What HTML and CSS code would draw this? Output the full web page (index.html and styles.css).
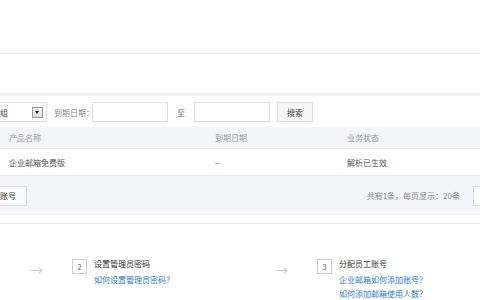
FILE: index.html
```html
<!DOCTYPE html>
<html lang="zh-CN">
<head>
    <meta charset="UTF-8">
    <title>企业邮箱</title>
    <link rel="stylesheet" href="styles.css">
</head>
<body>
    <div class="top"></div>
    <div class="sub"></div>
    <div class="gap"></div>
    <div class="panel">
        <div class="filter">
            <div class="select">
                <span>请选择分组</span>
                <i class="arrow"></i>
            </div>
            <label class="lbl">到期日期：</label>
            <input class="date" type="text">
            <span class="to">至</span>
            <input class="date" type="text">
            <button class="btn">搜索</button>
        </div>
        <div class="row head">
            <div class="c1">产品名称</div>
            <div class="c2">到期日期</div>
            <div class="c3">业务状态</div>
        </div>
        <div class="row">
            <div class="c1">企业邮箱免费版</div>
            <div class="c2">--</div>
            <div class="c3">解析已生效</div>
        </div>
        <div class="foot">
            <button class="btn add">添加账号</button>
            <span class="total">共有1条，每页显示：20条</span>
            <span class="pagebox"></span>
        </div>
    </div>
    <div class="steps">
        <div class="step">
            <span class="go">&rarr;</span>
            <span class="num">2</span>
            <div class="info">
                <p class="title">设置管理员密码</p>
                <a href="#">如何设置管理员密码？</a>
            </div>
        </div>
        <div class="step">
            <span class="go">&rarr;</span>
            <span class="num">3</span>
            <div class="info">
                <p class="title">分配员工账号</p>
                <a href="#">企业邮箱如何添加账号？</a>
                <a href="#">如何添加邮箱使用人数？</a>
            </div>
        </div>
    </div>
</body>
</html>
```

FILE: styles.css
```css
body {
    margin: 0;
    font-family: "Noto Sans CJK SC", "Liberation Sans", sans-serif;
    font-size: 8px;
    color: #555;
    background-color: #ffffff;
    overflow: hidden;
}
.top {
    height: 53px;
    border-bottom: 1px solid #e6e6e6;
}
.sub {
    height: 39px;
}
.gap {
    height: 3px;
    background-color: #f2f2f2;
}
.filter {
    display: flex;
    align-items: center;
    height: 20px;
    margin: 6px 0 5px -53px;
    white-space: nowrap;
}
.select {
    display: flex;
    align-items: center;
    justify-content: space-between;
    box-sizing: border-box;
    width: 100px;
    height: 20px;
    padding: 0 3px 0 20px;
    border: 1px solid #ddd;
    color: #444;
}
.arrow {
    position: relative;
    box-sizing: border-box;
    width: 11px;
    height: 11px;
    border: 1px solid #999;
    background: linear-gradient(#f6f6f6, #dcdcdc);
}
.arrow::after {
    content: "";
    position: absolute;
    left: 2px;
    top: 3px;
    border-left: 2.5px solid transparent;
    border-right: 2.5px solid transparent;
    border-top: 3px solid #222;
}
.lbl {
    margin-left: 7px;
    width: 38px;
    color: #888;
}
.date {
    box-sizing: border-box;
    width: 76px;
    height: 20px;
    border: 1px solid #ddd;
    padding: 0;
    margin: 0;
}
.to {
    width: 26px;
    text-align: center;
    color: #666;
}
.btn {
    box-sizing: border-box;
    height: 20px;
    padding: 0;
    border: 1px solid #ddd;
    background-color: #f6f6f6;
    font-family: inherit;
    font-size: 8px;
    color: #444;
    white-space: nowrap;
}
.filter .btn {
    width: 36px;
    margin-left: 7px;
}
.row {
    display: flex;
    align-items: center;
    height: 26px;
    border-bottom: 1px solid #e8e8e8;
    padding-left: 9px;
}
.row.head {
    height: 21px;
    background-color: #f4f5f9;
    color: #999;
}
.c1 {
    width: 206px;
}
.c2 {
    width: 132px;
}
.foot {
    display: flex;
    align-items: center;
    height: 39px;
    background-color: #f4f5f9;
    margin-left: -40px;
}
.foot .add {
    width: 67px;
    background-color: #fafafa;
    padding-right: 10px;
    text-align: right;
}
.total {
    margin-left: auto;
    color: #888;
}
.pagebox {
    box-sizing: border-box;
    width: 20px;
    height: 20px;
    margin: 0 -13px 0 13px;
    border: 1px solid #ddd;
    background-color: #fff;
}
.steps {
    display: flex;
    margin-top: 8px;
    border-top: 1px solid #e8e8e8;
    padding-top: 35px;
    padding-left: 30px;
}
.step {
    display: flex;
    align-items: flex-start;
}
.go {
    width: 42px;
    margin-top: 4px;
    font-size: 13px;
    line-height: 13px;
    color: #c8c8c8;
}
.num {
    box-sizing: border-box;
    width: 15px;
    height: 15px;
    border: 1px solid #ccc;
    text-align: center;
    line-height: 13px;
    font-size: 8px;
    color: #666;
}
.info {
    margin-left: 7px;
    width: 181px;
}
.title {
    margin: 0 0 4px;
    line-height: 10px;
    color: #333;
}
.info a {
    display: block;
    line-height: 14px;
    color: #2b7bd6;
    text-decoration: none;
}
```
